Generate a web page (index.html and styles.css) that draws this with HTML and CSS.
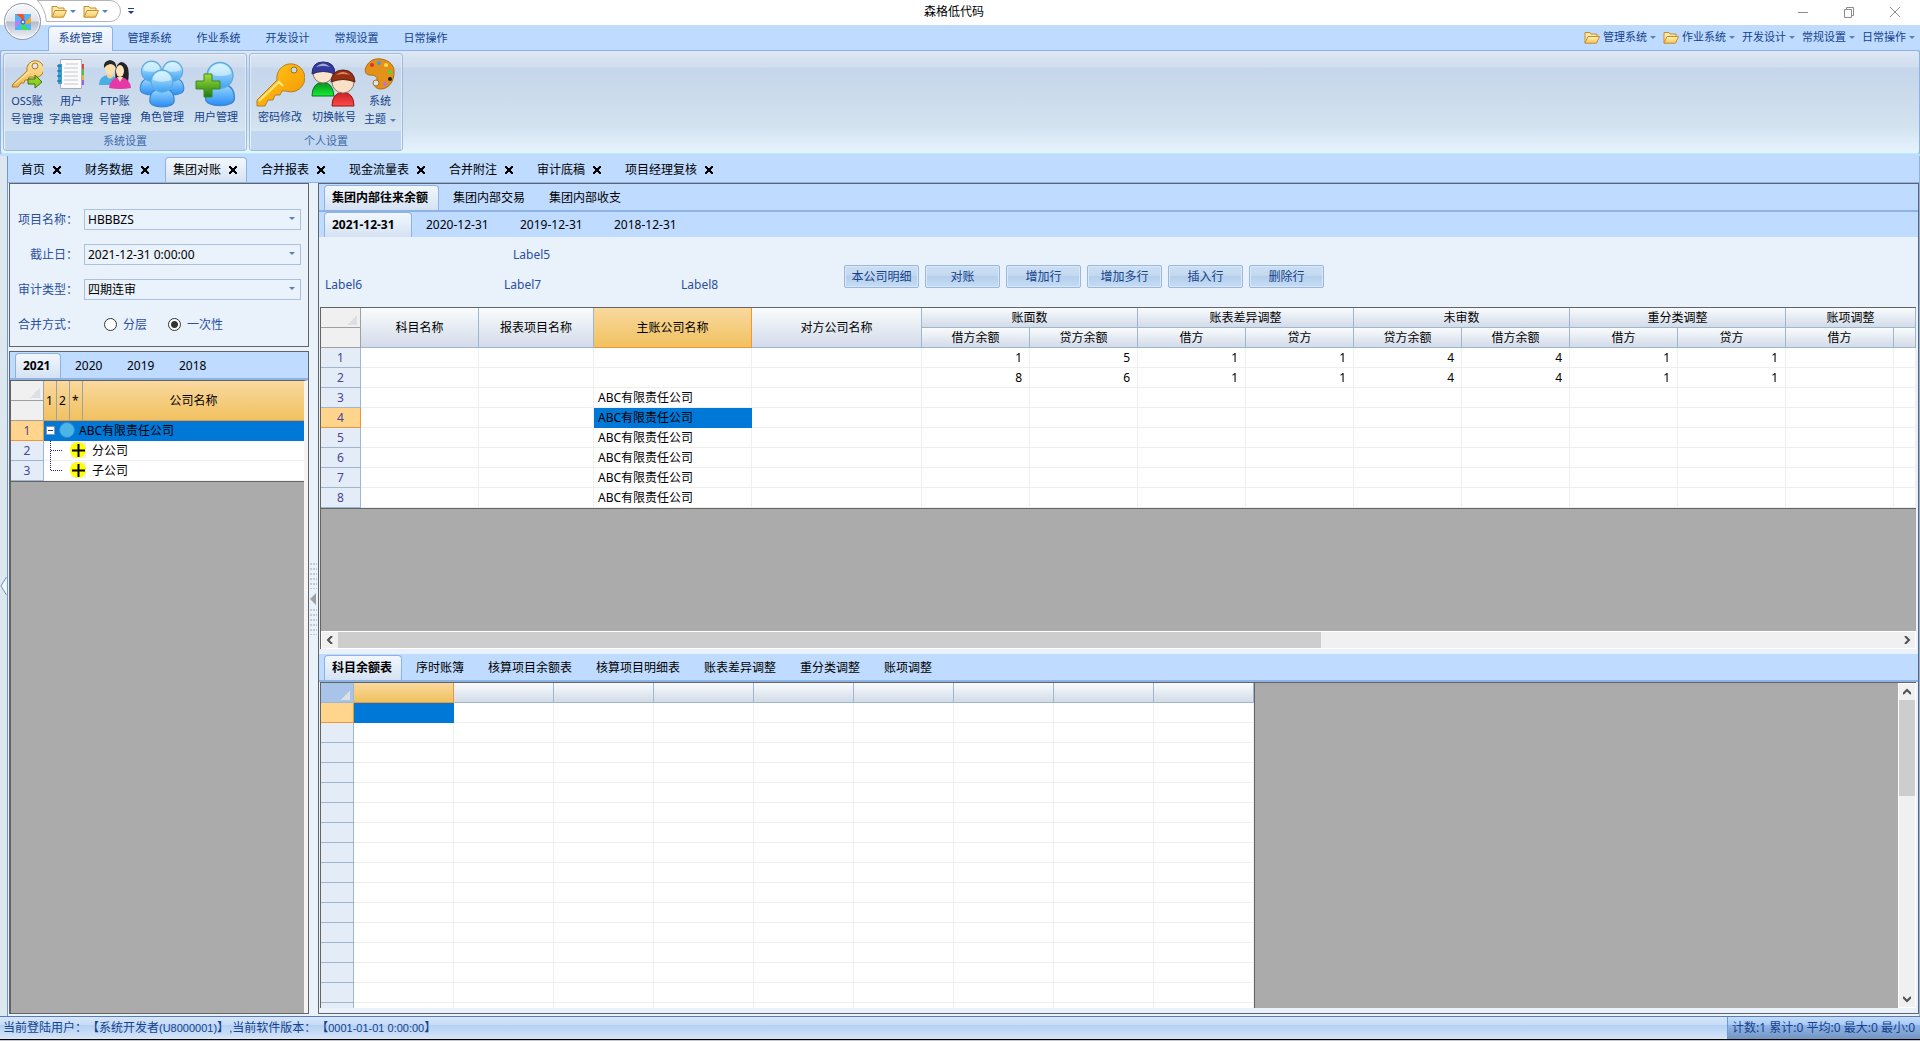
FILE: index.html
```html
<!DOCTYPE html>
<html lang="zh-CN">
<head>
    <meta charset="UTF-8">
    <meta name="viewport" content="width=device-width, initial-scale=1.0">
    <title>森格低代码</title>
    <link rel="stylesheet" href="styles.css">
</head>
<body>
    <!-- Shared icons -->
    <svg class="icon-defs" aria-hidden="true">
        <defs>
            <linearGradient id="gold" x1="0" y1="0" x2="0" y2="1"><stop offset="0" stop-color="#fff2b8"/><stop offset="1" stop-color="#f5c65a"/></linearGradient>
            <linearGradient id="key-gold" x1="0" y1="0" x2="1" y2="1"><stop offset="0" stop-color="#ffcf1a"/><stop offset="1" stop-color="#f59000"/></linearGradient>
            <linearGradient id="pale-gold" x1="0" y1="0" x2="0" y2="1"><stop offset="0" stop-color="#ffe7a0"/><stop offset="1" stop-color="#f0b54a"/></linearGradient>
            <linearGradient id="sky" x1="0" y1="0" x2="0" y2="1"><stop offset="0" stop-color="#c4f0ff"/><stop offset="1" stop-color="#3fa0f5"/></linearGradient>
            <linearGradient id="sky-body" x1="0" y1="0" x2="0" y2="1"><stop offset="0" stop-color="#9cdcff"/><stop offset="1" stop-color="#2a8cf5"/></linearGradient>
            <linearGradient id="green" x1="0" y1="0" x2="0" y2="1"><stop offset="0" stop-color="#a4e03c"/><stop offset="1" stop-color="#1d7d10"/></linearGradient>
            <linearGradient id="lime" x1="0" y1="0" x2="0" y2="1"><stop offset="0" stop-color="#0c8a20"/><stop offset="1" stop-color="#10f030"/></linearGradient>
            <linearGradient id="red" x1="0" y1="0" x2="0" y2="1"><stop offset="0" stop-color="#c81e24"/><stop offset="1" stop-color="#ff4a48"/></linearGradient>
            <symbol id="folder" viewBox="0 0 16 13">
                <path d="M1 12V1.500h5l1 1.500h6v3" fill="#fde9a8" stroke="#c88a2c"/>
                <path d="M1 12.200 4 5.500h11.500L12.500 12.200z" fill="url(#gold)" stroke="#c88a2c"/>
            </symbol>
            <symbol id="person" viewBox="0 0 24 32">
                <path d="M2 26C2 19 6 16 12 16s10 3 10 10c0 3-4 5-10 5S2 29 2 26z" fill="url(#sky-body)" stroke="#3b87d0"/>
                <circle cx="12" cy="10" r="9" fill="url(#sky)" stroke="#62a9dd"/>
                <path d="M4.500 9a7.500 7 0 0 1 15 0q-7.500 3-15 0z" fill="#e8faff" opacity=".6"/>
            </symbol>
        </defs>
    </svg>

    <!-- Title bar -->
    <header class="titlebar">
        <div class="quick-access">
            <svg class="quick-shape" viewBox="0 0 90 23" aria-hidden="true"><path d="M1 0Q9 8 10.500 21.500H74a10.500 10.500 0 0 0 0-21H1" fill="#fff" stroke="#b4b4b8"/></svg>
            <button aria-label="打开"><svg class="folder"><use href="#folder"/></svg><i class="arrow"></i></button>
            <button aria-label="打开文件"><svg class="folder"><use href="#folder"/></svg><i class="arrow"></i></button>
            <button class="quick-more" aria-label="更多"><i class="arrow dark"></i></button>
        </div>
        <button class="orb" aria-label="菜单">
            <svg viewBox="0 0 16 16">
                <path d="M0 0h16v16H0z" fill="#4db5f8"/>
                <path d="M1 0h7q3 4 0 8Q6 3 1 0z" fill="#f4502a"/>
                <path d="M16 1v8q-5 2-8-1 5 0 8-7z" fill="#f7a72a"/>
                <path d="M15 16H7q-2-5 1-8 1 5 7 8z" fill="#3fe24c"/>
                <path d="M0 15V8q4-3 8 0-5 1-8 7z" fill="#c57cf5"/>
                <circle cx="8" cy="8" r="2" fill="#dfe6ff" stroke="#2b42d0"/>
            </svg>
        </button>
        <h1>森格低代码</h1>
        <div class="window-buttons">
            <button aria-label="最小化"><svg viewBox="0 0 12 12"><path d="M1 6.500h10"/></svg></button>
            <button aria-label="还原"><svg viewBox="0 0 12 12"><path d="M1.500 3.500h7v8h-7zM3.500 3.500v-2h7v8h-2"/></svg></button>
            <button aria-label="关闭"><svg viewBox="0 0 12 12"><path d="M1 1l10 10M11 1 1 11"/></svg></button>
        </div>
    </header>

    <!-- Ribbon -->
    <nav class="ribbon-tabs">
        <button class="ribbon-tab active">系统管理</button>
        <button class="ribbon-tab">管理系统</button>
        <button class="ribbon-tab">作业系统</button>
        <button class="ribbon-tab">开发设计</button>
        <button class="ribbon-tab">常规设置</button>
        <button class="ribbon-tab">日常操作</button>
        <div class="ribbon-links">
            <button><svg class="folder"><use href="#folder"/></svg>管理系统<i class="arrow"></i></button>
            <button><svg class="folder"><use href="#folder"/></svg>作业系统<i class="arrow"></i></button>
            <button>开发设计<i class="arrow"></i></button>
            <button>常规设置<i class="arrow"></i></button>
            <button>日常操作<i class="arrow"></i></button>
        </div>
    </nav>
    <section class="ribbon">
        <div class="ribbon-group">
            <div class="group-buttons">
                <button>
                    <svg viewBox="0 0 32 32">
                        <path d="M2 26 16 13a8.500 8.500 0 1 1 5 6l-3 0-1 3-3 0-1 3-3 0-3 4-6 0z" fill="url(#pale-gold)" stroke="#b87820"/>
                        <circle cx="24" cy="8" r="3" fill="#d8e4f4" stroke="#b87820"/>
                        <path d="M4 26 18 14" stroke="#fff3c8" fill="none"/>
                        <path d="M17 21h7v-4l7 7-7 6v-4h-7z" fill="#8fd020" stroke="#3e6e10"/>
                    </svg>
                    <span>OSS账<br>号管理</span>
                </button>
                <button>
                    <svg viewBox="0 0 32 32">
                        <path d="M26 6h3v5h-3z" fill="#e84040"/><path d="M26 11h3v6h-3z" fill="#4cc04c"/><path d="M26 17h3v5h-3z" fill="#f0b030"/><path d="M26 22h3v5h-3z" fill="#a060e0"/>
                        <path d="M3 6h7v20H3z" fill="#38a0dc"/>
                        <path d="M5.500 1.500h21v29h-21z" fill="#fbfbfb" stroke="#a8aeb8"/>
                        <path d="M11 6h12M9 10h14M9 14h14M9 18h14M9 22h14M9 26h14" stroke="#c4c8ce"/>
                        <path d="M3 6h4v20H3z" fill="#38a0dc"/>
                        <path d="M2 8h4M2 13h4M2 18h4M2 23h4" stroke="#3a5670"/>
                    </svg>
                    <span>用户<br>字典管理</span>
                </button>
                <button>
                    <svg viewBox="0 0 32 32">
                        <path d="M0 27q0-9 9-10 11 1 12 10z" fill="#4aaee4"/>
                        <path d="M8 13h6v6q-3 3-6 0z" fill="#f5cf90"/>
                        <ellipse cx="11" cy="10" rx="5" ry="7" fill="#fbe0ac"/>
                        <path d="M5 10q-1-7 6-8 7 1 6 8-2-4-6-4-4 1-6 4z" fill="#26262c"/>
                        <path d="M17 24q-3-17 5-20 10 1 7 20z" fill="#222126"/>
                        <path d="M10 30q1-10 11-11 10 1 11 11-11 2-22 0z" fill="#e838a8"/>
                        <path d="M18 19h6l-3 5z" fill="#fbdcb4"/>
                        <ellipse cx="21" cy="13" rx="4" ry="6" fill="#ffe4ba"/>
                    </svg>
                    <span>FTP账<br>号管理</span>
                </button>
                <button class="large">
                    <svg viewBox="0 0 50 50">
                        <use href="#person" x="1" y="2" width="27" height="36"/>
                        <use href="#person" x="22" y="2" width="27" height="36"/>
                        <use href="#person" x="8" y="11" width="34" height="39"/>
                    </svg>
                    <span>角色管理</span>
                </button>
                <button class="large wide">
                    <svg viewBox="0 0 50 50">
                        <use href="#person" x="11" y="3" width="36" height="46"/>
                        <path d="M13 16h8v7h8v8h-8v8h-8v-8H5v-8h8z" fill="url(#green)" stroke="#3a8a20"/>
                    </svg>
                    <span>用户管理</span>
                </button>
            </div>
            <div class="group-caption">系统设置</div>
        </div>
        <div class="ribbon-group">
            <div class="group-buttons">
                <button class="large wide">
                    <svg viewBox="0 0 50 50">
                        <path d="M2 42 22 22a14 14 0 1 1 9 11l-4 0-2 4-5 0-2 5-5 0-3 6-8 0z" fill="url(#key-gold)" stroke="#b08030"/>
                        <path d="M4 43 24 24l4 4" fill="none" stroke="#ffe880" stroke-width="2"/>
                        <circle cx="39" cy="12" r="3" fill="#c8d8f0" stroke="#a07020"/>
                    </svg>
                    <span>密码修改</span>
                </button>
                <button class="large">
                    <svg viewBox="0 0 50 50">
                        <path d="M3 38q0-13 11-14 10 1 11 14z" fill="url(#lime)" stroke="#0f7020"/>
                        <circle cx="14" cy="15" r="10" fill="#fbe3cc" stroke="#8a7468"/>
                        <path d="M3 16Q3 4 14 4q12 0 12 12-12-5-23 0z" fill="#343a9c" stroke="#262b70"/>
                        <path d="M7 9q7-7 14 0-7-2-14 0z" fill="#a4a8e0"/>
                        <path d="M23 48q0-13 11-14 11 1 11 14z" fill="url(#red)" stroke="#901818"/>
                        <circle cx="34" cy="24" r="11" fill="#fbe0c8" stroke="#8a7468"/>
                        <path d="M22 24q1-12 12-12t12 12q-12-5-24 0z" fill="#963014" stroke="#602010"/>
                        <path d="M27 17q7-6 14 0-7-2-14 0z" fill="#e08a60"/>
                    </svg>
                    <span>切换帐号</span>
                </button>
                <button class="narrow">
                    <svg viewBox="0 0 32 32">
                        <path d="M6 17C-1 17 0 8 7 3s22-1 23 9c1 13-7 19-13 19s-8-4-5-8-1-6-6-6z" fill="#e39118" stroke="#b06c10"/>
                        <circle cx="12" cy="25" r="3" fill="#d8e4f4" stroke="#b06c10"/>
                        <circle cx="8" cy="7" r="2" fill="#e03030"/><circle cx="15" cy="5" r="2" fill="#3c9cf0"/><circle cx="22" cy="7" r="2" fill="#f8e050"/>
                        <circle cx="26" cy="14" r="2" fill="#50d840"/><circle cx="26" cy="21" r="2" fill="#202020"/><circle cx="21" cy="26" r="2" fill="#c070e8"/>
                    </svg>
                    <span>系统<br>主题<i class="arrow"></i></span>
                </button>
            </div>
            <div class="group-caption">个人设置</div>
        </div>
    </section>

    <div class="workspace">
        <aside class="dock-strip"><button aria-label="展开"><svg viewBox="0 0 7 20"><path d="M6.500 1 1 10l5.500 9" fill="#f4f8fd" stroke="#6f8fc0"/></svg></button></aside>
        <div class="document">
            <!-- Document tabs -->
            <nav class="doc-tabs">
                <div class="doc-tab"><button>首页</button><button class="close" aria-label="关闭首页"></button></div>
                <div class="doc-tab"><button>财务数据</button><button class="close" aria-label="关闭财务数据"></button></div>
                <div class="doc-tab active"><button>集团对账</button><button class="close" aria-label="关闭集团对账"></button></div>
                <div class="doc-tab"><button>合并报表</button><button class="close" aria-label="关闭合并报表"></button></div>
                <div class="doc-tab"><button>现金流量表</button><button class="close" aria-label="关闭现金流量表"></button></div>
                <div class="doc-tab"><button>合并附注</button><button class="close" aria-label="关闭合并附注"></button></div>
                <div class="doc-tab"><button>审计底稿</button><button class="close" aria-label="关闭审计底稿"></button></div>
                <div class="doc-tab"><button>项目经理复核</button><button class="close" aria-label="关闭项目经理复核"></button></div>
            </nav>

            <div class="panes">
                <div class="sidebar">
                    <!-- Filters -->
                    <form class="filters">
                        <div class="field">
                            <label for="project">项目名称：</label>
                            <div class="select"><select id="project"><option>HBBBZS</option></select><i class="arrow"></i></div>
                        </div>
                        <div class="field">
                            <label for="deadline">截止日：</label>
                            <div class="select"><select id="deadline"><option>2021-12-31 0:00:00</option></select><i class="arrow"></i></div>
                        </div>
                        <div class="field">
                            <label for="audit">审计类型：</label>
                            <div class="select"><select id="audit"><option>四期连审</option></select><i class="arrow"></i></div>
                        </div>
                        <div class="field">
                            <span class="field-name">合并方式：</span>
                            <div class="radios">
                                <label><input type="radio" name="merge">分层</label>
                                <label><input type="radio" name="merge" checked>一次性</label>
                            </div>
                        </div>
                    </form>

                    <!-- Company tree -->
                    <div class="tree-panel">
                        <nav class="tabs years">
                            <button class="tab active">2021</button>
                            <button class="tab">2020</button>
                            <button class="tab">2019</button>
                            <button class="tab">2018</button>
                        </nav>
                        <div class="grid-area">
                            <table class="grid tree">
                                <colgroup><col class="w-33"><col class="w-13"><col class="w-13"><col class="w-13"><col></colgroup>
                                <thead>
                                    <tr><th class="corner"><i></i></th><th rowspan="2" class="picked level">1</th><th rowspan="2" class="picked level">2</th><th rowspan="2" class="picked level">*</th><th rowspan="2" class="picked name">公司名称</th></tr>
                                    <tr><th class="corner"></th></tr>
                                </thead>
                                <tbody>
                                    <tr>
                                        <th class="picked">1</th>
                                        <td colspan="4" class="selected"><div class="node">
                                            <svg width="31" height="19" viewBox="0 0 31 19"><path d="M2.500 5.500h8v8h-8z" fill="#fff" stroke="#8a98ac"/><path d="M4 9.500h5" stroke="#203878"/><circle cx="23" cy="9" r="7.500" fill="#4db4e8" stroke="#2c8cc8"/></svg>
                                            ABC有限责任公司</div></td>
                                    </tr>
                                    <tr>
                                        <th>2</th>
                                        <td colspan="4"><div class="node">
                                            <svg width="44" height="20" viewBox="0 0 44 20"><path d="M6.500 0v20M7 9.500h12" stroke="#2020a0" stroke-dasharray="1 1" fill="none"/><path d="M27 1h15v16H27z" fill="#f0f0f0"/><circle cx="34" cy="9" r="8" fill="#ffff00"/><path d="M34.500 3v13M28 9.500h13" stroke="#000" stroke-width="2"/></svg>
                                            分公司</div></td>
                                    </tr>
                                    <tr>
                                        <th>3</th>
                                        <td colspan="4"><div class="node">
                                            <svg width="44" height="20" viewBox="0 0 44 20"><path d="M6.500 0v10M7 9.500h12" stroke="#2020a0" stroke-dasharray="1 1" fill="none"/><path d="M27 1h15v16H27z" fill="#f0f0f0"/><circle cx="34" cy="9" r="8" fill="#ffff00"/><path d="M34.500 3v13M28 9.500h13" stroke="#000" stroke-width="2"/></svg>
                                            子公司</div></td>
                                    </tr>
                                </tbody>
                            </table>
                        </div>
                    </div>
                </div>

                <div class="splitter">
                    <span class="dots"></span>
                    <svg width="7" height="12" viewBox="0 0 7 12"><path d="M6 0v12L0 6z" fill="#a0a0a0"/></svg>
                    <span class="dots"></span>
                </div>

                <main class="content">
                    <section class="upper">
                        <nav class="tabs">
                            <button class="tab active">集团内部往来余额</button>
                            <button class="tab">集团内部交易</button>
                            <button class="tab">集团内部收支</button>
                        </nav>
                        <nav class="tabs dates">
                            <button class="tab active">2021-12-31</button>
                            <button class="tab">2020-12-31</button>
                            <button class="tab">2019-12-31</button>
                            <button class="tab">2018-12-31</button>
                        </nav>
                        <div class="toolbar">
                            <div class="labels">
                                <span class="label-5">Label5</span>
                                <span class="label-6">Label6</span>
                                <span>Label7</span>
                                <span>Label8</span>
                            </div>
                            <button>本公司明细</button>
                            <button>对账</button>
                            <button>增加行</button>
                            <button>增加多行</button>
                            <button>插入行</button>
                            <button>删除行</button>
                        </div>
                        <div class="grid-area">
                            <div class="grid-view">
                                <table class="grid balances">
                                    <colgroup>
                                        <col class="w-40"><col class="w-118"><col class="w-115"><col class="w-158"><col class="w-170">
                                        <col span="9" class="w-108"><col>
                                    </colgroup>
                                    <thead>
                                        <tr>
                                            <th class="corner"><i></i></th>
                                            <th rowspan="2">科目名称</th><th rowspan="2">报表项目名称</th><th rowspan="2" class="picked">主账公司名称</th><th rowspan="2">对方公司名称</th>
                                            <th colspan="2">账面数</th><th colspan="2">账表差异调整</th><th colspan="2">未审数</th><th colspan="2">重分类调整</th><th colspan="2">账项调整</th>
                                        </tr>
                                        <tr>
                                            <th class="corner"></th>
                                            <th>借方余额</th><th>贷方余额</th><th>借方</th><th>贷方</th><th>贷方余额</th><th>借方余额</th><th>借方</th><th>贷方</th><th>借方</th><th></th>
                                        </tr>
                                    </thead>
                                    <tbody id="balance-rows"></tbody>
                                </table>
                            </div>
                            <div class="scrollbar horizontal">
                                <button aria-label="向左"><svg viewBox="0 0 8 8"><path d="M6 0 2 4l4 4"/></svg></button>
                                <div class="track"><div class="thumb"></div></div>
                                <button aria-label="向右"><svg viewBox="0 0 8 8"><path d="M2 0l4 4-4 4"/></svg></button>
                            </div>
                        </div>
                    </section>

                    <section class="lower">
                        <nav class="tabs">
                            <button class="tab active">科目余额表</button>
                            <button class="tab">序时账簿</button>
                            <button class="tab">核算项目余额表</button>
                            <button class="tab">核算项目明细表</button>
                            <button class="tab">账表差异调整</button>
                            <button class="tab">重分类调整</button>
                            <button class="tab">账项调整</button>
                        </nav>
                        <div class="grid-area with-vertical">
                            <div class="grid-view">
                                <table class="grid details">
                                    <colgroup><col class="w-33"><col span="9" class="w-100"></colgroup>
                                    <thead>
                                        <tr><th class="corner blue"><i></i></th><th class="picked"></th><th></th><th></th><th></th><th></th><th></th><th></th><th></th><th></th></tr>
                                    </thead>
                                    <tbody id="detail-rows"></tbody>
                                </table>
                            </div>
                            <div class="scrollbar vertical">
                                <button aria-label="向上"><svg viewBox="0 0 8 8"><path d="M0 6l4-4 4 4"/></svg></button>
                                <div class="track"><div class="thumb"></div></div>
                                <button aria-label="向下"><svg viewBox="0 0 8 8"><path d="M0 2l4 4 4-4"/></svg></button>
                            </div>
                        </div>
                    </section>
                </main>
            </div>
        </div>
    </div>

    <!-- Status bar -->
    <footer class="statusbar">
        <div class="status-user">当前登陆用户：【系统开发者<span class="code">(U8000001)</span>】<span class="code">,</span>当前软件版本：【<span class="code">0001-01-01 0:00:00</span>】</div>
        <div class="status-totals">计数:1 累计:0 平均:0 最大:0 最小:0</div>
    </footer>

    <script>
        const company = 'ABC有限责任公司';
        const balances = [
            { values: [1, 5, 1, 1, 4, 4, 1, 1] },
            { values: [8, 6, 1, 1, 4, 4, 1, 1] },
            { company },
            { company, selected: true },
            { company },
            { company },
            { company },
            { company }
        ];

        document.getElementById('balance-rows').innerHTML = balances.map((row, i) => {
            let html = `<tr><th class="${row.selected ? 'picked' : ''}">${i + 1}</th><td></td><td></td>`;
            html += `<td class="${row.selected ? 'selected' : ''}">${row.company || ''}</td><td></td>`;
            for (let c = 0; c < 10; c++) {
                html += `<td class="number">${row.values && row.values[c] ? row.values[c] : ''}</td>`;
            }
            return html + '</tr>';
        }).join('');

        // Empty rows, the first one is selected
        let details = '';
        for (let r = 0; r < 40; r++) {
            details += `<tr><th class="${r === 0 ? 'picked' : ''}"></th><td class="${r === 0 ? 'selected' : ''}"></td>`;
            details += '<td></td>'.repeat(8) + '</tr>';
        }
        document.getElementById('detail-rows').innerHTML = details;
    </script>
</body>
</html>
```
FILE: styles.css
```css
* {
    box-sizing: border-box;
}

body {
    font-family: 'Noto Sans', 'Noto Sans CJK SC', sans-serif;
    font-size: 12px;
    line-height: 18px;
    color: #000;
    background-color: #c8c8cc;
    margin: 0;
    padding-bottom: 1px;
    display: flex;
    flex-direction: column;
    height: 100vh;
    overflow: hidden;
}

button {
    font: inherit;
    color: inherit;
    background: none;
    border: none;
    padding: 0;
    margin: 0;
    white-space: nowrap;
}

svg {
    display: block;
    flex: none;
}

.icon-defs {
    position: absolute;
    width: 0;
    height: 0;
}

.arrow {
    display: inline-block;
    flex: none;
    border: 3px solid transparent;
    border-top-color: #5580bb;
    border-bottom: none;
}

.arrow.dark {
    border-top-color: #1c3c80;
}

.folder {
    width: 16px;
    height: 13px;
}

/* Title bar */
.titlebar {
    position: relative;
    z-index: 2;
    flex: none;
    display: grid;
    grid-template-columns: 1fr auto 1fr;
    height: 25px;
    background-color: #fff;
}

.titlebar h1 {
    margin: 3px 12px 0 0;
    font-size: 12px;
    font-weight: normal;
}

.quick-access {
    position: relative;
    display: flex;
    align-items: center;
    gap: 7px;
    padding: 0 0 3px 51px;
}

.quick-shape {
    position: absolute;
    left: 36px;
    top: 0;
    width: 90px;
    height: 23px;
}

.quick-access button {
    position: relative;
    display: flex;
    align-items: center;
    gap: 3px;
}

.quick-access .quick-more {
    margin-left: 13px;
    padding-top: 2px;
    border-top: 1px solid #1c3c80;
}

.orb {
    position: absolute;
    left: 4px;
    top: 3px;
    display: flex;
    align-items: center;
    justify-content: center;
    width: 37px;
    height: 37px;
    border: 1px solid #8a94a4;
    border-radius: 50%;
    background: linear-gradient(#f8f9fb, #dfe3ea 48%, #b4bccb 52%, #f2f5fa);
    box-shadow: inset 0 0 0 1px #fff;
}

.orb svg {
    width: 16px;
    height: 16px;
}

.window-buttons {
    display: flex;
    justify-content: flex-end;
}

.window-buttons button {
    display: flex;
    align-items: center;
    justify-content: center;
    width: 46px;
    height: 23px;
}

.window-buttons button:last-child {
    margin-right: 2px;
}

.window-buttons svg {
    width: 12px;
    height: 12px;
    fill: none;
    stroke: #8c8c8c;
}

/* Ribbon */
.ribbon-tabs {
    flex: none;
    display: flex;
    align-items: flex-end;
    gap: 4px;
    height: 25px;
    padding-left: 48px;
    background-color: #bfdbff;
    color: #15428b;
    font-size: 11px;
}

.ribbon-tab {
    width: 65px;
    height: 24px;
    padding-bottom: 2px;
    border: 1px solid transparent;
    border-bottom: none;
    border-radius: 4px 4px 0 0;
}

.ribbon-tab.active {
    position: relative;
    z-index: 1;
    height: 25px;
    margin-bottom: -1px;
    border-color: #8db2e3;
    background: linear-gradient(#f6f9fe, #e2ebf7);
}

.ribbon-links {
    display: flex;
    gap: 7px;
    height: 24px;
    margin-left: auto;
    padding-right: 5px;
}

.ribbon-links button {
    display: flex;
    align-items: center;
    gap: 3px;
    padding-bottom: 2px;
}

.ribbon {
    flex: none;
    display: flex;
    gap: 2px;
    height: 104px;
    padding: 2px;
    border: 1px solid #8db2e3;
    border-bottom-color: #b4eef8;
    border-radius: 3px;
    background: linear-gradient(#dde8f5, #d0dded 16px, #c6d6ed 17px, #cadaec 40px, #d2e2ef 75px, #e6f4fe);
    box-shadow: 0 2px 1px #97aed4;
    color: #15428b;
    font-size: 11px;
}

.ribbon-group {
    display: flex;
    flex-direction: column;
    border: 1px solid #9dbcdc;
    border-radius: 3px;
    box-shadow: inset 0 0 0 1px rgba(255, 255, 255, 0.4);
}

.group-buttons {
    flex: 1;
    display: flex;
    padding: 4px 1px 0;
}

.group-buttons button {
    display: flex;
    flex-direction: column;
    align-items: center;
    gap: 2px;
    width: 44px;
    line-height: 18px;
}

.group-buttons svg {
    width: 32px;
    height: 32px;
}

.group-buttons .large {
    gap: 0;
    width: 50px;
}

.group-buttons .wide {
    width: 58px;
}

.group-buttons .narrow {
    width: 42px;
}

.group-buttons .large svg {
    width: 50px;
    height: 50px;
}

.group-buttons .arrow {
    margin-left: 4px;
    vertical-align: middle;
}

.group-caption {
    height: 19px;
    margin: 0 1px;
    padding-top: 1px;
    background-color: #c1d7f1;
    color: #3e6aaa;
    text-align: center;
}

/* Workspace */
.workspace {
    flex: 1;
    display: flex;
    min-height: 0;
    padding-top: 2px;
    background-color: #bfdbff;
}

.dock-strip {
    flex: none;
    display: flex;
    align-items: center;
    width: 8px;
    background-color: #dde8ee;
    border-right: 1px solid #6f97d0;
}

.dock-strip svg {
    width: 7px;
    height: 20px;
}

.document {
    flex: 1;
    display: flex;
    flex-direction: column;
    min-width: 0;
    border-right: 1px solid #8db2e3;
}

.doc-tabs {
    flex: none;
    display: flex;
    align-items: flex-end;
    gap: 6px;
    height: 27px;
    padding-left: 5px;
    border-bottom: 1px solid #8db2e3;
}

.doc-tab {
    display: flex;
    align-items: center;
    gap: 8px;
    height: 25px;
    padding: 0 9px 0 7px;
    border: 1px solid transparent;
    border-bottom: none;
    border-radius: 4px 4px 0 0;
}

.doc-tab.active {
    border-color: #8db2e3;
    background: linear-gradient(#f2f7fd, #d5e2f3);
}

.close {
    width: 8px;
    height: 8px;
    background:
        linear-gradient(45deg, transparent 42%, #000 42%, #000 58%, transparent 58%),
        linear-gradient(-45deg, transparent 42%, #000 42%, #000 58%, transparent 58%);
}

.panes {
    flex: 1;
    display: flex;
    min-height: 0;
    padding: 0 0 2px 1px;
    background-color: #e9f1fb;
}

.sidebar {
    flex: none;
    display: flex;
    flex-direction: column;
    gap: 4px;
    width: 300px;
}

.filters {
    display: flex;
    flex-direction: column;
    gap: 14px;
    padding: 25px 7px 11px 8px;
    border: 1px solid #646464;
    color: #2a4f9e;
}

.field {
    display: flex;
    align-items: center;
    height: 21px;
}

.field > label,
.field-name {
    width: 60px;
    margin-right: 6px;
    text-align: right;
    white-space: nowrap;
}

.select {
    position: relative;
    flex: 1;
}

.select select {
    appearance: none;
    display: block;
    width: 100%;
    height: 21px;
    padding: 0 20px 0 3px;
    border: 1px solid #abc1de;
    border-radius: 0;
    background-color: #eaf2fb;
    color: #000;
    font: inherit;
}

.select .arrow {
    position: absolute;
    right: 6px;
    top: 8px;
}

.radios {
    display: flex;
    gap: 21px;
    margin-left: 20px;
}

.radios label {
    display: flex;
    align-items: center;
    gap: 6px;
}

.radios input {
    appearance: none;
    width: 13px;
    height: 13px;
    margin: 0;
    border: 1px solid #333;
    border-radius: 50%;
    background-color: #fff;
}

.radios input:checked {
    background: radial-gradient(circle, #333 3px, #fff 4px);
}

.tree-panel {
    flex: 1;
    display: flex;
    flex-direction: column;
    min-height: 0;
    border: 1px solid #646464;
}

.tree-panel .grid-area {
    margin: 0;
    border-right: 4px solid #f4f4f4;
}

/* Inner tab strips */
.tabs {
    flex: none;
    display: flex;
    align-items: flex-end;
    gap: 6px;
    height: 28px;
    padding-left: 5px;
    border-bottom: 2px solid #8db2e3;
    background-color: #bfdbff;
}

.tab {
    height: 25px;
    padding: 0 9px 0 7px;
    border: 1px solid transparent;
    border-bottom: none;
    border-radius: 4px 4px 0 0;
    text-align: left;
}

.tab.active {
    padding-right: 10px;
    border-color: #8db2e3;
    background: linear-gradient(#f2f7fd, #d5e2f3);
    font-weight: bold;
}

.lower .tab.active {
    padding-right: 9px;
}

.dates {
    height: 25px;
    border-bottom: none;
}

.dates .tab {
    width: 88px;
}

.years .tab {
    width: 46px;
}

.splitter {
    flex: none;
    display: flex;
    flex-direction: column;
    align-items: center;
    justify-content: center;
    gap: 4px;
    width: 9px;
}

.dots {
    width: 7px;
    height: 26px;
    background: radial-gradient(circle at 1px 1px, #c4cad6 1px, transparent 1px) 0 0 / 3px 5px;
}

.content {
    flex: 1;
    display: flex;
    flex-direction: column;
    min-width: 0;
    border: 1px solid #646464;
}

.upper {
    flex: 25;
    display: flex;
    flex-direction: column;
    min-height: 0;
    padding-bottom: 5px;
}

.lower {
    flex: 19;
    display: flex;
    flex-direction: column;
    min-height: 0;
    padding-bottom: 5px;
}

.toolbar {
    flex: none;
    display: flex;
    align-items: flex-start;
    gap: 6px;
    height: 70px;
    padding: 3px 0 0 6px;
    color: #2a4f9e;
}

.labels {
    display: grid;
    grid-template-columns: 179px 177px 157px;
    line-height: 30px;
}

.label-5 {
    grid-column: 2 / 4;
    padding-left: 9px;
}

.label-6 {
    grid-column: 1;
}

.toolbar button {
    width: 75px;
    height: 23px;
    margin-top: 25px;
    border: 1px solid #9ab7de;
    border-radius: 2px;
    background: linear-gradient(#cbdff3, #c4d9ef 45%, #b5cfec 50%, #c6dcf5);
    box-shadow: inset 0 0 0 1px #d9e8f8;
    color: #15428b;
    line-height: 20px;
}

/* Data grids */
.grid-area {
    flex: 1;
    display: flex;
    flex-direction: column;
    min-height: 0;
    margin: 0 2px 0 1px;
    border-top: 1px solid #646464;
    border-left: 1px solid #646464;
    background-color: #ababab;
    overflow: hidden;
}

.grid-area.with-vertical {
    flex-direction: row;
}

.grid-view {
    flex: 1;
    min-width: 0;
    min-height: 0;
    overflow: hidden;
}

.grid {
    table-layout: fixed;
    border-collapse: separate;
    border-spacing: 0;
    border-bottom: 1px solid #646464;
    background-color: #fff;
}

.tree,
.balances {
    width: 100%;
}

.details {
    width: 934px;
    border-right: 1px solid #646464;
}

.w-13 { width: 13px; }
.w-33 { width: 33px; }
.w-40 { width: 40px; }
.w-100 { width: 100px; }
.w-108 { width: 108px; }
.w-115 { width: 115px; }
.w-118 { width: 118px; }
.w-158 { width: 158px; }
.w-170 { width: 170px; }

.grid th,
.grid td {
    height: 20px;
    padding: 1px 0 0;
    border-right: 1px solid #efefef;
    border-bottom: 1px solid #efefef;
    font-weight: normal;
    white-space: nowrap;
    overflow: hidden;
}

.grid td {
    padding-left: 4px;
}

.grid td.number {
    padding: 1px 7px 0 0;
    text-align: right;
}

.grid th {
    border-color: #9eb6ce;
}

.grid thead th {
    background: linear-gradient(#f9fcfd, #d3dbe9);
}

.grid tbody th {
    background-color: #e4ecf7;
    color: #4c4395;
}

.grid thead th.corner {
    border-color: #a0a0a0;
    background: #f0f0f0;
}

.grid thead th.corner.blue {
    border-color: #9eb6ce;
    background: #a9c4e9;
}

.corner i {
    display: block;
    width: 10px;
    height: 10px;
    margin: 4px 3px 0 auto;
    background: linear-gradient(135deg, transparent 50%, #dcdfe6 50%);
}

.grid thead th.picked {
    border-color: #f29536;
    background: linear-gradient(#f9d99f, #f1c15f);
}

.grid thead th.level {
    border-right-color: #a0a0a0;
    text-align: left;
    text-indent: 2px;
}

.grid thead th.name {
    border-right: none;
}

.grid tbody th.picked {
    border-color: #f29536;
    background-color: #ffd58d;
}

.grid td.selected {
    background-color: #0078d7;
    border-color: #0078d7;
}

.tree td {
    border-right: none;
}

.grid.tree td {
    padding: 0;
}

.node {
    display: flex;
    align-items: center;
    gap: 4px;
    height: 19px;
    line-height: 19px;
}

/* Scroll bars */
.scrollbar {
    flex: none;
    display: flex;
    background-color: #f0f0f0;
    border: 1px solid #fff;
}

.scrollbar svg {
    width: 8px;
    height: 8px;
    margin: auto;
    fill: none;
    stroke: #505050;
    stroke-width: 2;
}

.scrollbar button {
    width: 16px;
    height: 16px;
}

.track {
    flex: 1;
}

.thumb {
    background-color: #cdcdcd;
}

.horizontal {
    height: 18px;
}

.horizontal .thumb {
    width: 63%;
    height: 16px;
}

.vertical {
    flex-direction: column;
    width: 18px;
}

.vertical .thumb {
    width: 16px;
    height: 33%;
}

/* Status bar */
.statusbar {
    flex: none;
    display: flex;
    height: 24px;
    border-top: 1px solid #567db1;
    border-bottom: 1px solid #000;
    color: #15428b;
    line-height: 21px;
    text-spacing-trim: space-all;
}

.status-user {
    flex: 1;
    padding-left: 3px;
    background: linear-gradient(#d7e6f9, #c7dcf8 35%, #b3d0f5 36%, #d7e5f7);
}

.code {
    font-family: 'Liberation Sans', sans-serif;
    font-size: 11px;
}

.status-totals {
    padding: 0 5px 0 4px;
    border-left: 1px solid #6f97d0;
    background: linear-gradient(#c5dcf8, #a9caf7 35%, #90b6ea 36%, #7495c2);
}
```
